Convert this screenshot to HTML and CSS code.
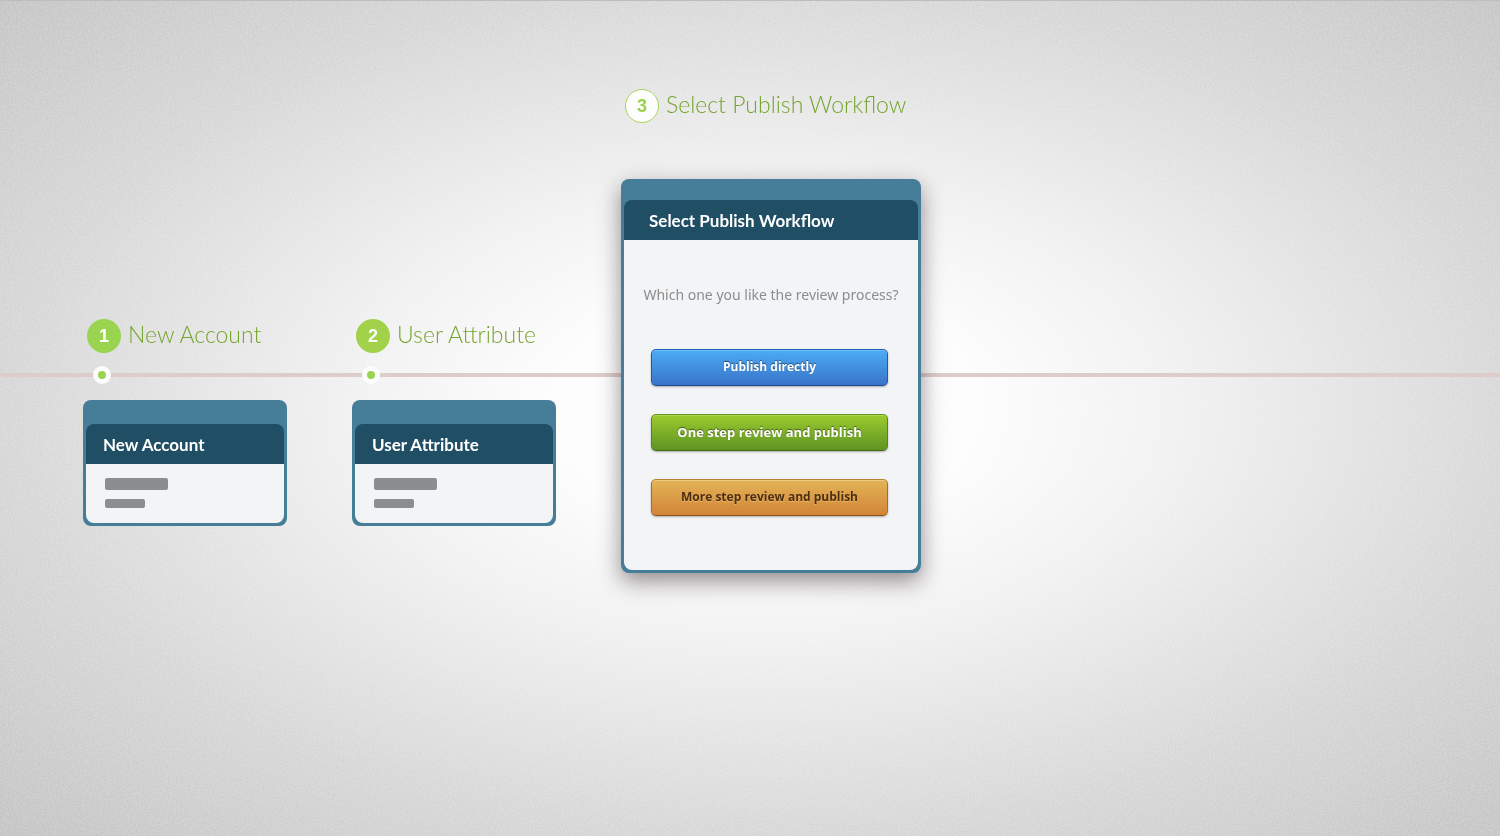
FILE: index.html
```
<!DOCTYPE html>
<html lang="en">
<head>
<meta charset="utf-8">
<meta name="viewport" content="width=device-width, initial-scale=1">
<title>Select Publish Workflow</title>
<link rel="stylesheet" href="styles.css">
</head>
<body>
<svg class="grain" aria-hidden="true">
  <filter id="noise" x="0" y="0" width="100%" height="100%" color-interpolation-filters="sRGB">
    <feTurbulence type="fractalNoise" baseFrequency="0.6" numOctaves="2" seed="4"/>
    <feColorMatrix type="matrix" values="3 0 0 0 -1  3 0 0 0 -1  3 0 0 0 -1  0 0 0 0 1"/>
  </filter>
  <rect width="100%" height="100%" filter="url(#noise)"/>
</svg>
<main class="timeline">
  <section class="step">
    <h2 class="step-title"><span class="number">1</span>New Account</h2>
    <span class="dot"></span>
    <article class="card">
      <h3 class="card-title">New Account</h3>
      <div class="card-body summary">
        <span class="bar bar-long"></span>
        <span class="bar bar-short"></span>
      </div>
    </article>
  </section>
  <section class="step">
    <h2 class="step-title"><span class="number number-second">2</span>User Attribute</h2>
    <span class="dot"></span>
    <article class="card">
      <h3 class="card-title">User Attribute</h3>
      <div class="card-body summary">
        <span class="bar bar-long"></span>
        <span class="bar bar-short"></span>
      </div>
    </article>
  </section>
  <section class="step step-active">
    <h2 class="step-title"><span class="number number-active">3</span>Select Publish Workflow</h2>
    <article class="card card-active">
      <h3 class="card-title">Select Publish Workflow</h3>
      <div class="card-body choices">
        <p class="question">Which one you like the review process?</p>
        <button class="choice blue" type="button">Publish directly</button>
        <button class="choice green" type="button">One step review and publish</button>
        <button class="choice amber" type="button">More step review and publish</button>
      </div>
    </article>
  </section>
</main>
</body>
</html>
```
FILE: styles.css
```
* { box-sizing: border-box; }

body {
  margin: 0;
  min-height: 100vh;
  position: relative;
  font-family: Lato, "Open Sans", sans-serif;
  background: radial-gradient(ellipse 1100px 620px at 51% 49%, #fff 0%, #fdfdfd 20%, #f2f2f2 38%, #dadada 68%, #c6c6c6 100%);
  border-top: 1px solid #bdbdbd;
}

.grain {
  position: absolute;
  inset: 0;
  width: 100%;
  height: 100%;
  mix-blend-mode: overlay;
  opacity: 0.09;
}

.timeline {
  position: relative;
  display: flex;
  align-items: flex-start;
  gap: 65px;
  padding: 88px 83px 40px;
}

/* Track that runs behind every step */
.timeline::before {
  content: "";
  position: absolute;
  left: 0;
  right: 0;
  top: 372px;
  height: 4px;
  background: #ddcdc8;
}

.step {
  position: relative;
  flex: none;
  width: 204px;
  margin-top: 230px;
}

.step-active {
  width: 300px;
  margin-top: 0;
}

.step-title {
  display: flex;
  align-items: flex-start;
  gap: 7px;
  margin: 0;
  padding-left: 4px;
  height: 34px;
  font-size: 23px;
  font-weight: 300;
  line-height: 30px;
  color: #74a52f;
  white-space: nowrap;
}

.number {
  width: 34px;
  height: 34px;
  border-radius: 50%;
  background: #99d34f;
  color: #fff;
  font: bold 18px/34px "Liberation Sans", Arial, sans-serif;
  text-align: center;
}

.number-second { background: #a1d24a; }

.number-active {
  border: 1px solid #a5d65a;
  background: #fdfdfd;
  color: #9ad04d;
  line-height: 32px;
}

.dot {
  display: block;
  width: 18px;
  height: 18px;
  margin: 13px 0 16px 10px;
  border: 5px solid #fdfdfd;
  border-radius: 50%;
  background: #99d34f;
}

.card {
  padding: 24px 3px 3px;
  border-radius: 8px;
  background: #467d98;
}

.card-active {
  margin-top: 56px;
  padding-top: 21px;
  box-shadow: 0 8px 22px rgba(60, 45, 50, 0.55);
}

.card-title {
  margin: 0;
  padding: 0 17px;
  border-radius: 8px 8px 0 0;
  background: #1f4e65;
  color: #fff;
  font-size: 17px;
  font-weight: 700;
  line-height: 42px;
  height: 40px;
}

.card-active .card-title { padding-left: 25px; }

.card-body {
  border-radius: 0 0 8px 8px;
  background: #f3f4f6;
}

.summary {
  display: grid;
  gap: 9px;
  padding: 14px 19px 15px;
}

.bar {
  border-radius: 2px;
  background: #8c8d90;
}

.bar-long { width: 63px; height: 12px; }
.bar-short { width: 40px; height: 9px; }

.choices {
  display: flex;
  flex-direction: column;
  gap: 28px;
  padding: 43px 15px 54px;
}

.question {
  margin: 0 0 14px;
  font: 14px/24px "Noto Sans", "Open Sans", sans-serif;
  color: #8c8c8c;
  text-align: center;
  white-space: nowrap;
}

.choice {
  height: 37px;
  margin: 0 15px 0 12px;
  padding: 0 0 2px;
  border: 1px solid;
  border-radius: 5px;
  color: #fff;
  font: bold 12px/20px "Open Sans", "Noto Sans", sans-serif;
  white-space: nowrap;
  cursor: pointer;
}

.blue {
  border-color: #2364b5 #2059a8 #1c4c91;
  background: linear-gradient(#4cacf5, #3973c9);
  box-shadow: inset 0 1px #70bdf8, 0 1px 2px rgba(0, 0, 0, 0.3);
  text-shadow: 0 -1px 1px rgba(0, 0, 0, 0.5);
}

.green {
  border-color: #65991c #55831b #416b13;
  background: linear-gradient(#9bcb2e, #5e9323);
  box-shadow: inset 0 1px #b0d858, 0 1px 2px rgba(0, 0, 0, 0.3);
  font-size: 13px;
  text-shadow: 0 -1px 1px rgba(0, 0, 0, 0.5);
}

.amber {
  border-color: #b88532 #a86d29 #8e5316;
  background: linear-gradient(#e4b457, #d28437);
  box-shadow: inset 0 1px #efca7e, 0 1px 2px rgba(0, 0, 0, 0.3);
  color: #4c2e10;
  text-shadow: 0 1px 1px rgba(255, 220, 150, 0.5);
}
```
